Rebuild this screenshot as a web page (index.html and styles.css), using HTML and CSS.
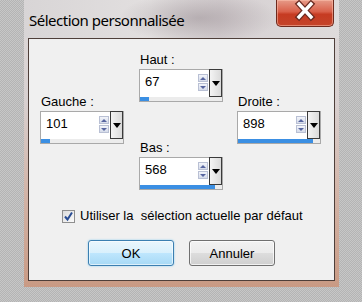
FILE: index.html
```html
<!DOCTYPE html>
<html lang="fr">
<head>
    <meta charset="UTF-8">
    <title>Sélection personnalisée</title>
    <link rel="stylesheet" href="styles.css">
</head>
<body>

<div class="window">
    <div class="titlebar">
        <span class="title">Sélection personnalisée</span>
        <span class="close">
            <svg width="58" height="27" viewBox="0 0 58 27">
                <path d="M23 5 L35 18 M35 5 L23 18" stroke="#6a2a20" stroke-width="6" stroke-linecap="square" fill="none"/>
                <path d="M23 5 L35 18 M35 5 L23 18" stroke="#fff" stroke-width="3.4" stroke-linecap="square" fill="none"/>
            </svg>
        </span>
    </div>

    <div class="panel">
        <div class="fields">
            <div class="col col-side">
                <div class="field">
                    <label>Gauche :</label>
                    <div class="spin">
                        <div class="spin-main">
                            <span class="spin-value">101</span>
                            <span class="spin-arrows"><span class="spin-up"></span><span class="spin-down"></span></span>
                            <span class="spin-drop"></span>
                        </div>
                        <div class="spin-track"><div class="spin-bar" style="width: 9px"></div></div>
                    </div>
                </div>
            </div>

            <div class="col col-mid">
                <div class="field">
                    <label>Haut :</label>
                    <div class="spin">
                        <div class="spin-main">
                            <span class="spin-value">67</span>
                            <span class="spin-arrows"><span class="spin-up"></span><span class="spin-down"></span></span>
                            <span class="spin-drop"></span>
                        </div>
                        <div class="spin-track"><div class="spin-bar" style="width: 9px"></div></div>
                    </div>
                </div>
                <div class="field">
                    <label>Bas :</label>
                    <div class="spin">
                        <div class="spin-main">
                            <span class="spin-value">568</span>
                            <span class="spin-arrows"><span class="spin-up"></span><span class="spin-down"></span></span>
                            <span class="spin-drop"></span>
                        </div>
                        <div class="spin-track"><div class="spin-bar" style="width: 75px"></div></div>
                    </div>
                </div>
            </div>

            <div class="col col-side col-right">
                <div class="field">
                    <label>Droite :</label>
                    <div class="spin">
                        <div class="spin-main">
                            <span class="spin-value">898</span>
                            <span class="spin-arrows"><span class="spin-up"></span><span class="spin-down"></span></span>
                            <span class="spin-drop"></span>
                        </div>
                        <div class="spin-track"><div class="spin-bar" style="width: 75px"></div></div>
                    </div>
                </div>
            </div>
        </div>

        <div class="check-row">
            <span class="checkbox">
                <svg width="11" height="11" viewBox="0 0 11 11">
                    <path d="M2 5.5 L4.5 8.5 L9 1.5" stroke="#2a4d94" stroke-width="2" fill="none"/>
                </svg>
            </span>
            <span>Utiliser la&nbsp; sélection actuelle par défaut</span>
        </div>

        <div class="buttons">
            <button class="btn btn-default">OK</button>
            <button class="btn">Annuler</button>
        </div>
    </div>
</div>

</body>
</html>
```

FILE: styles.css
```css
* {
    box-sizing: border-box;
}
body {
    margin: 0;
    height: 302px;
    background-color: #bebebe;
    background-image: repeating-conic-gradient(#b4b4b4 0 25%, #c7c7c7 0 50%);
    background-size: 2px 2px;
    font-family: "Liberation Sans", Arial, sans-serif;
    font-size: 13px;
    color: #000;
}
.window {
    margin-left: 24px;
    width: 315px;
    height: 287px;
    padding: 0 4px 6px;
    display: flex;
    flex-direction: column;
    background: linear-gradient(to bottom, #dedada 0%, #d8d0d0 35%, #d3b6aa 65%, #c99a84 100%);
}
.titlebar {
    height: 38px;
    margin: 0 -4px;
    padding: 0 5px;
    display: flex;
    justify-content: space-between;
    align-items: flex-start;
    background:
        radial-gradient(ellipse 80px 26px at 175px 18px, rgba(140, 128, 134, 0.45), rgba(140, 128, 134, 0)),
        linear-gradient(to right, #d8d5d6, #e2dfdf 40%, #d6d0d2 62%, #dedbdb);
}
.title {
    padding-top: 10px;
    font-family: "Noto Sans", sans-serif;
    font-size: 15px;
    line-height: 20px;
    letter-spacing: -0.5px;
    color: #000;
}
.close {
    width: 58px;
    height: 27px;
    border: 1px solid #6e2a1e;
    border-top: none;
    border-radius: 0 0 5px 5px;
    background: linear-gradient(to bottom, #e69a88 0%, #d9604a 45%, #c63b22 55%, #c4442a 100%);
    box-shadow: inset 0 0 0 1px rgba(255, 200, 180, 0.5);
    display: flex;
    margin-top: 0;
}
.close svg {
    margin: -1px;
}
.panel {
    flex: 1;
    border: 1px solid #4e3f3a;
    background: #f0f0f0;
}
.fields {
    display: flex;
    padding: 13px 0 0 11px;
}
.col {
    display: flex;
    flex-direction: column;
    gap: 38px;
}
.col-side {
    padding-top: 42px;
}
.col-mid {
    margin-left: 15px;
}
.col-right {
    margin-left: 14px;
}
.field label {
    display: block;
    padding-left: 1px;
    margin-bottom: 1px;
    line-height: 16px;
}
.spin {
    width: 84px;
    height: 33px;
    border: 1px solid #a9a9a9;
    background: #fff;
    display: flex;
    flex-direction: column;
}
.spin-main {
    height: 27px;
    display: flex;
}
.spin-value {
    flex: 1;
    padding: 4px 0 0 5px;
    line-height: 16px;
}
.spin-arrows {
    width: 10px;
    margin-right: 1px;
    padding-top: 4px;
    display: flex;
    flex-direction: column;
    gap: 1px;
}
.spin-up,
.spin-down {
    height: 8px;
    border: 1px solid #b9c0d4;
    background: linear-gradient(to bottom, #f2f4fa, #d6dcea);
    display: flex;
    align-items: center;
    justify-content: center;
}
.spin-up::before {
    content: "";
    border: 3px solid transparent;
    border-top: none;
    border-bottom: 3px solid #5866a0;
}
.spin-down::before {
    content: "";
    border: 3px solid transparent;
    border-bottom: none;
    border-top: 3px solid #5866a0;
}
.spin-drop {
    width: 13px;
    height: 28px;
    margin: -1px 0 0;
    border: 1px solid #3a3a3a;
    background: linear-gradient(to right, #f4f4f4, #dadada);
    display: flex;
    justify-content: center;
    padding-top: 11px;
}
.spin-drop::before {
    content: "";
    width: 0;
    height: 0;
    border-left: 4px solid transparent;
    border-right: 4px solid transparent;
    border-top: 5px solid #000;
}
.spin-track {
    height: 4px;
    background: #ececec;
}
.spin-bar {
    height: 4px;
    background: #3b8fe3;
}
.check-row {
    margin-top: 19px;
    padding-left: 33px;
    height: 14px;
    display: flex;
    align-items: center;
    gap: 5px;
    line-height: 14px;
}
.checkbox {
    width: 13px;
    height: 13px;
    border: 1px solid #8f8f8f;
    background: linear-gradient(to bottom right, #dcdcdc, #fbfbfb);
    display: flex;
    align-items: center;
    justify-content: center;
}
.buttons {
    margin-top: 17px;
    padding-left: 59px;
    display: flex;
    gap: 15px;
}
.btn {
    width: 86px;
    height: 26px;
    padding: 0;
    font-family: "Liberation Sans", Arial, sans-serif;
    font-size: 13px;
    color: #000;
    border: 1px solid #707070;
    border-radius: 3px;
    background: linear-gradient(to bottom, #f2f2f2 0%, #ebebeb 50%, #dddddd 51%, #cfcfcf 100%);
    box-shadow: inset 0 0 0 1px rgba(255, 255, 255, 0.7);
}
.btn-default {
    border-color: #3c7fb1;
    background: linear-gradient(to bottom, #eaf6fd 0%, #d9f0fc 50%, #bee6fd 51%, #a7d9f5 100%);
    box-shadow: inset 0 0 0 1px rgba(255, 255, 255, 0.6), 0 0 2px #7fc8f0;
}
```
